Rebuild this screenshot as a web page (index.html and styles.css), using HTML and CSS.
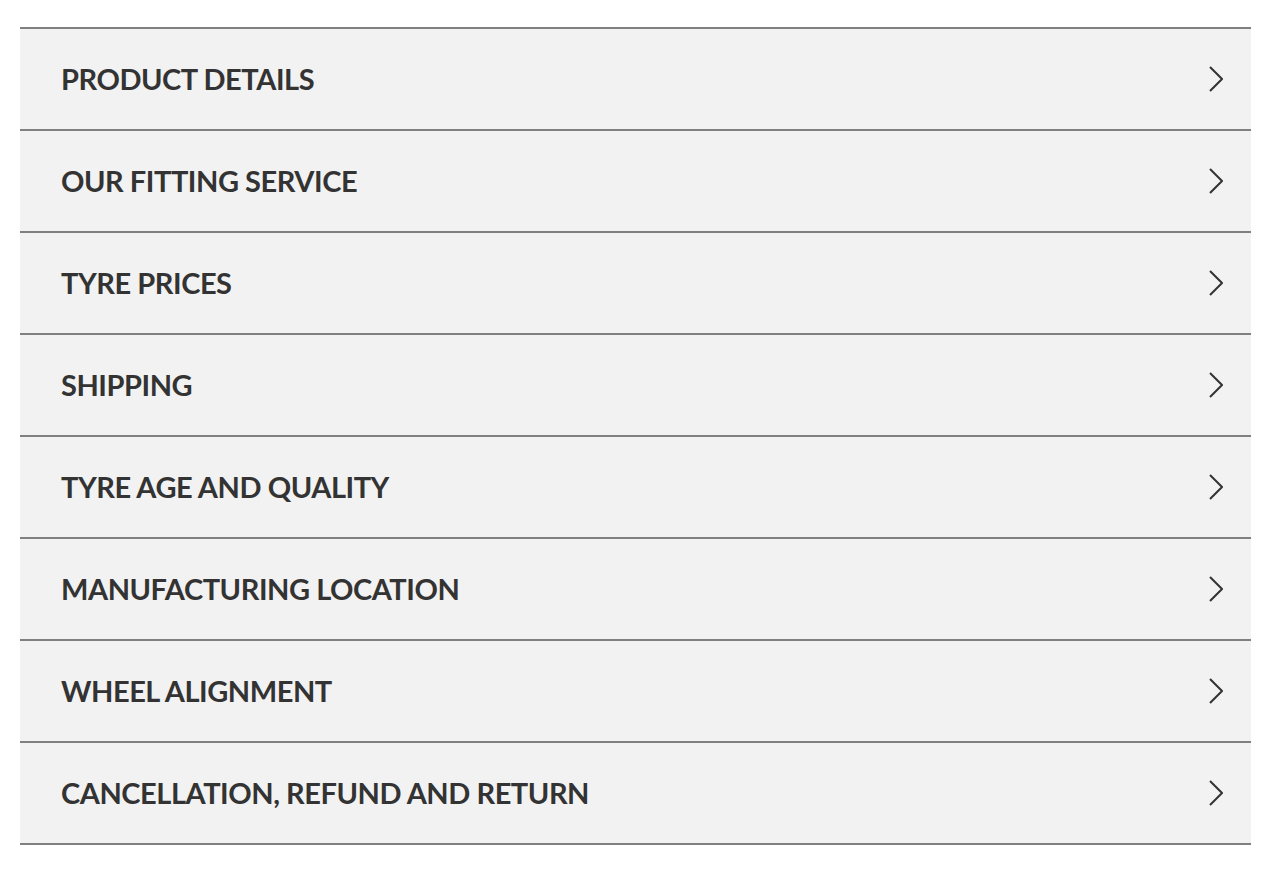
FILE: index.html
```html
<!DOCTYPE html>
<html>
<head>
<meta charset="utf-8">
<link rel="stylesheet" href="styles.css">
</head>
<body>
<ul class="accordion">
  <li class="item"><span class="label">PRODUCT DETAILS</span><svg class="chev" viewBox="0 0 14 26" width="14" height="26"><path d="M1 1 L13 13 L1 25" fill="none" stroke="#333" stroke-width="2"/></svg></li>
  <li class="item"><span class="label">OUR FITTING SERVICE</span><svg class="chev" viewBox="0 0 14 26" width="14" height="26"><path d="M1 1 L13 13 L1 25" fill="none" stroke="#333" stroke-width="2"/></svg></li>
  <li class="item"><span class="label">TYRE PRICES</span><svg class="chev" viewBox="0 0 14 26" width="14" height="26"><path d="M1 1 L13 13 L1 25" fill="none" stroke="#333" stroke-width="2"/></svg></li>
  <li class="item"><span class="label">SHIPPING</span><svg class="chev" viewBox="0 0 14 26" width="14" height="26"><path d="M1 1 L13 13 L1 25" fill="none" stroke="#333" stroke-width="2"/></svg></li>
  <li class="item"><span class="label">TYRE AGE AND QUALITY</span><svg class="chev" viewBox="0 0 14 26" width="14" height="26"><path d="M1 1 L13 13 L1 25" fill="none" stroke="#333" stroke-width="2"/></svg></li>
  <li class="item"><span class="label">MANUFACTURING LOCATION</span><svg class="chev" viewBox="0 0 14 26" width="14" height="26"><path d="M1 1 L13 13 L1 25" fill="none" stroke="#333" stroke-width="2"/></svg></li>
  <li class="item"><span class="label">WHEEL ALIGNMENT</span><svg class="chev" viewBox="0 0 14 26" width="14" height="26"><path d="M1 1 L13 13 L1 25" fill="none" stroke="#333" stroke-width="2"/></svg></li>
  <li class="item"><span class="label">CANCELLATION, REFUND AND RETURN</span><svg class="chev" viewBox="0 0 14 26" width="14" height="26"><path d="M1 1 L13 13 L1 25" fill="none" stroke="#333" stroke-width="2"/></svg></li>
</ul>
</body>
</html>
```
FILE: styles.css
```css
html, body {
  margin: 0;
  padding: 0;
  background: #ffffff;
}
body {
  padding: 27px 17px 0 20px;
  font-family: "Lato", "Liberation Sans", sans-serif;
}
.accordion {
  list-style: none;
  margin: 0;
  padding: 0;
  border-top: 2px solid #808080;
}
.item {
  display: flex;
  align-items: center;
  justify-content: space-between;
  height: 100px;
  background: #f2f2f2;
  border-bottom: 2px solid #808080;
  padding: 0 28px 0 41px;
  box-sizing: content-box;
}
.label {
  font-size: 29px;
  font-weight: 700;
  color: #333333;
  letter-spacing: -0.45px;
  padding-bottom: 2px;
}
.chev {
  display: block;
  flex: none;
}
```
